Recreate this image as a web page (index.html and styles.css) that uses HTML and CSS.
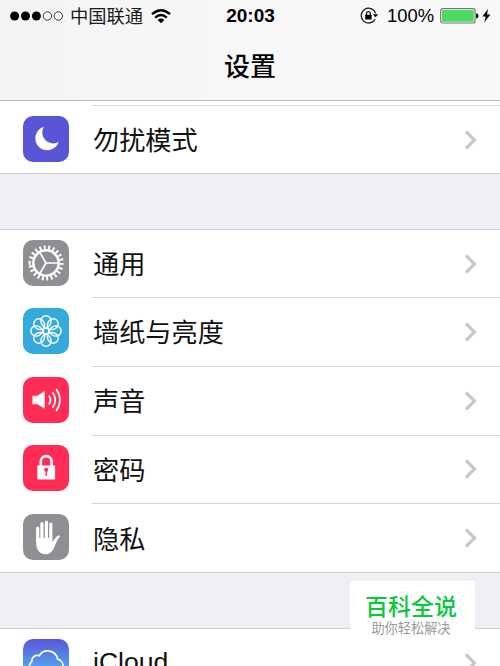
FILE: index.html
```html
<!DOCTYPE html>
<html lang="zh-CN">
<head>
  <meta charset="UTF-8" />
  <meta name="viewport" content="width=device-width, initial-scale=1" />
  <title>设置</title>
  <link rel="stylesheet" href="styles.css">
</head>
<body>

<header class="navbar">
  <div class="status">
    <div class="status-left">
      <svg class="signal" width="54" height="12" viewBox="0 0 54 12">
        <circle cx="4.6" cy="6" r="4.5" />
        <circle cx="15.5" cy="6" r="4.5" />
        <circle cx="26.4" cy="6" r="4.5" />
        <circle class="empty" cx="37.4" cy="6" r="4.2" />
        <circle class="empty" cx="48.3" cy="6" r="4.2" />
      </svg>
      <span class="carrier">中国联通</span>
      <svg class="wifi" width="20" height="15" viewBox="0 0 20 15">
        <path d="M1 5.2 Q10 -2.7 19 5.2" />
        <path d="M4.2 8.6 Q10 3.4 15.8 8.6" />
        <path class="solid" d="M6.7 11 Q10 8.2 13.3 11 L10 14.3 Z" />
      </svg>
    </div>
    <span class="time">20:03</span>
    <div class="status-right">
      <svg class="rotation" width="20" height="18" viewBox="0 0 20 18">
        <path class="ring" d="M15.1 12.2 A7.4 7.4 0 1 1 15.6 6.2" />
        <path d="M12.8 7.2 H18.2 L15.5 10.2 Z" />
        <rect x="5.2" y="7.8" width="6.4" height="4.6" rx="0.5" />
        <path class="ring" d="M6.5 8 V6.5 A1.9 1.9 0 0 1 10.3 6.5 V8" />
      </svg>
      <span class="percent">100%</span>
      <svg class="battery" width="39" height="16" viewBox="0 0 39 16">
        <rect class="case" x="0.7" y="0.7" width="34.4" height="14.3" rx="2" />
        <rect class="level" x="2" y="2" width="31.8" height="11.7" rx="0.6" />
        <path d="M36.2 5.2 Q38.5 5.5 38.5 7.9 Q38.5 10.3 36.2 10.6 Z" />
      </svg>
      <svg class="bolt" width="9" height="14" viewBox="0 0 9 14">
        <path d="M6 0 L0.4 7.6 H3.7 L2.2 13.6 L8.4 5.6 H5 Z" />
      </svg>
    </div>
  </div>
  <h1>设置</h1>
</header>

<main>
  <section class="group first">
    <div class="row">
      <svg class="icon purple" viewBox="0 0 46 46">
        <path class="fill" d="M20.8 10.8 A12 12 0 1 0 35.7 26 A11 11 0 0 1 20.8 10.8 Z" />
      </svg>
      <div class="cell"><span>勿扰模式</span><svg class="arrow" viewBox="0 0 14 20"><path d="M2 1.5 L10.5 10 L2 18.5" /></svg></div>
    </div>
  </section>

  <section class="group">
    <div class="row">
      <svg class="icon gray" viewBox="0 0 46 46">
        <circle class="teeth" cx="23" cy="23" r="15.4" pathLength="66" />
        <circle class="line thick" cx="23" cy="23" r="12.7" />
        <path class="line" d="M36 23 H23 L16.5 11.8 M23 23 L16.5 34.2" />
      </svg>
      <div class="cell"><span>通用</span><svg class="arrow" viewBox="0 0 14 20"><path d="M2 1.5 L10.5 10 L2 18.5" /></svg></div>
    </div>
    <div class="row">
      <svg class="icon blue" viewBox="0 0 46 46">
        <defs>
          <path id="petal" d="M23 20.1 C20.5 18.8 17.9 15.8 17.9 12.9 A5.1 5.1 0 0 1 28.1 12.9 C28.1 15.8 25.5 18.8 23 20.1" />
        </defs>
        <g class="line petals">
          <use href="#petal" />
          <use href="#petal" transform="rotate(45 23 23)" />
          <use href="#petal" transform="rotate(90 23 23)" />
          <use href="#petal" transform="rotate(135 23 23)" />
          <use href="#petal" transform="rotate(180 23 23)" />
          <use href="#petal" transform="rotate(225 23 23)" />
          <use href="#petal" transform="rotate(270 23 23)" />
          <use href="#petal" transform="rotate(315 23 23)" />
          <circle cx="23" cy="23" r="2.9" />
        </g>
      </svg>
      <div class="cell"><span>墙纸与亮度</span><svg class="arrow" viewBox="0 0 14 20"><path d="M2 1.5 L10.5 10 L2 18.5" /></svg></div>
    </div>
    <div class="row">
      <svg class="icon red" viewBox="0 0 46 46">
        <path class="fill" d="M9.5 18.8 H14.3 L21.7 14 V31.8 L14.3 27.2 H9.5 Z" />
        <path class="line" d="M25.8 18.5 Q29.2 23 25.8 27.5 M29.5 15.3 Q35 23 29.5 30.7 M33.2 12 Q40.8 23 33.2 34" />
      </svg>
      <div class="cell"><span>声音</span><svg class="arrow" viewBox="0 0 14 20"><path d="M2 1.5 L10.5 10 L2 18.5" /></svg></div>
    </div>
    <div class="row">
      <svg class="icon red" viewBox="0 0 46 46">
        <rect class="fill" x="14.3" y="20.5" width="17.8" height="14" />
        <path class="line shackle" d="M17.8 21 V16.5 A5.4 5.4 0 0 1 28.6 16.5 V21" />
        <path class="keyhole" d="M22.6 26.8 A2.1 2.1 0 1 1 23.9 26.8 V31 H22.6 Z" />
      </svg>
      <div class="cell"><span>密码</span><svg class="arrow" viewBox="0 0 14 20"><path d="M2 1.5 L10.5 10 L2 18.5" /></svg></div>
    </div>
    <div class="row">
      <svg class="icon gray" viewBox="0 0 46 46">
        <path class="fingers" d="M14.7 25 V14.2 M18.9 24 V9.5 M23.4 24 V8 M27.8 24 V10" />
        <path class="fill" d="M13.1 24 H29.4 V28 L33.2 22.9 Q35.4 20.9 37.4 22 C34.2 25.5 32.5 30.5 30.8 34.5 Q28 40.3 22.5 40.3 Q16.8 40.3 14.3 35 Q13.1 32 13.1 28 Z" />
      </svg>
      <div class="cell"><span>隐私</span><svg class="arrow" viewBox="0 0 14 20"><path d="M2 1.5 L10.5 10 L2 18.5" /></svg></div>
    </div>
  </section>

  <section class="group">
    <div class="row">
      <svg class="icon cloud" viewBox="0 0 46 46">
        <path class="line" d="M13 34.5 A7 7 0 0 1 8.8 22.3 A5.5 5.5 0 0 1 16.2 16.8 A10 10 0 0 1 34.6 20.2 A7.3 7.3 0 0 1 34 34.5 Z" />
      </svg>
      <div class="cell latin"><span>iCloud</span><svg class="arrow" viewBox="0 0 14 20"><path d="M2 1.5 L10.5 10 L2 18.5" /></svg></div>
    </div>
  </section>
</main>

<aside class="badge">
  <strong>百科全说</strong>
  <small>助你轻松解决</small>
</aside>

</body>
</html>
```
FILE: styles.css
```css
html {
  overflow: hidden;
}
body {
  margin: 0;
  height: 666px;
  overflow: hidden;
  position: relative;
  background: #efeef4;
  color: #000;
  font-family: "Liberation Sans", "Noto Sans CJK SC", sans-serif;
}
.navbar {
  box-sizing: border-box;
  height: 101px;
  background: linear-gradient(90deg, #f4f4f6, #f8f8f8 55%);
  border-bottom: 1px solid #bfbfc2;
}
.status {
  display: grid;
  grid-template-columns: 1fr auto 1fr;
  align-items: center;
  height: 32px;
  padding: 0 9px 0 10px;
  font-size: 18px;
  line-height: 32px;
}
.status-left,
.status-right {
  display: flex;
  align-items: center;
}
.status-right {
  justify-content: flex-end;
}
.signal .empty {
  fill: none;
  stroke: #222;
  stroke-width: 0.9;
}
.carrier {
  margin-left: 6px;
  font-family: "Noto Sans CJK SC", sans-serif;
  font-weight: 400;
  font-size: 18.3px;
  line-height: 30px;
  padding-bottom: 2px;
  color: #1a1a1a;
}
.wifi {
  margin-left: 8px;
  fill: none;
  stroke: #000;
  stroke-width: 2.4;
}
.wifi .solid {
  fill: #000;
  stroke: none;
}
.time {
  font-size: 19px;
  font-weight: bold;
}
.rotation .ring {
  fill: none;
  stroke: #111;
  stroke-width: 1.2;
}
.percent {
  margin: 0 5px 0 7px;
  font-size: 18.4px;
}
.battery {
  margin-left: 1px;
}
.battery .case {
  fill: #fff;
  stroke: #777;
  stroke-width: 1.2;
}
.battery .level {
  fill: #4cd964;
}
.bolt {
  margin-left: 3px;
}
.navbar h1 {
  margin: 0;
  font-family: "Noto Sans CJK SC", sans-serif;
  font-size: 26px;
  font-weight: 500;
  line-height: 66px;
  text-align: center;
}
.group {
  margin-bottom: 55px;
  background: #fff;
  border-top: 1px solid #d0d0d4;
  border-bottom: 1px solid #d0d0d4;
}
.group.first {
  padding-top: 4px;
  border-top: none;
}
.group.first .cell {
  border-top: 1px solid #d9d9db;
}
.row {
  display: flex;
  align-items: center;
  height: 68.75px;
  padding-left: 23px;
}
.row:first-child {
  height: 67px;
}
.group.first .row {
  height: 68px;
}
.icon {
  flex: none;
  width: 46px;
  height: 46px;
  margin: 0 23px 1px 0;
  border-radius: 10px;
}
.cell {
  box-sizing: border-box;
  flex: 1;
  display: flex;
  align-items: center;
  justify-content: space-between;
  height: 100%;
  padding: 0 22px 0 1px;
  font-family: "Noto Sans CJK SC", sans-serif;
  font-size: 26.2px;
  font-weight: 400;
  color: #111;
}
.cell span {
  padding-bottom: 1px;
}
.row + .row .cell {
  border-top: 1px solid #d3d3d6;
}
.cell.latin {
  font-family: "Liberation Sans", sans-serif;
  font-size: 26.6px;
}
.arrow {
  width: 14px;
  height: 20px;
  fill: none;
  stroke: #c7c7cc;
  stroke-width: 3.2;
}
.purple {
  background: #5856d6;
}
.gray {
  background: #8e8e93;
}
.blue {
  background: #34aadc;
}
.red {
  background: #ff2d55;
}
.cloud {
  background: linear-gradient(#5856d6, #55a5ef 65%, #5ac8fa);
}
.fill {
  fill: #fff;
}
.line {
  fill: none;
  stroke: #fff;
  stroke-width: 1.7;
}
.line.thick {
  stroke-width: 2.5;
}
.teeth {
  fill: none;
  stroke: #fff;
  stroke-width: 4.4;
  stroke-dasharray: 1.3 1.7;
}
.petals {
  stroke-width: 1.4;
}
.shackle {
  stroke-width: 2.6;
}
.keyhole {
  fill: #ff2d55;
}
.fingers {
  fill: none;
  stroke: #fff;
  stroke-width: 3.2;
  stroke-linecap: round;
}
.badge {
  position: absolute;
  left: 350px;
  top: 581px;
  width: 125px;
  height: 64px;
  background: #fff;
  font-family: "Noto Sans CJK SC", sans-serif;
  text-align: center;
}
.badge strong {
  display: block;
  padding: 9px 3px 0 0;
  color: #08c93c;
  font-size: 23px;
  font-weight: 500;
  line-height: 30px;
}
.badge small {
  display: block;
  padding-right: 3px;
  color: #999;
  font-size: 13.2px;
  line-height: 15px;
}
```
